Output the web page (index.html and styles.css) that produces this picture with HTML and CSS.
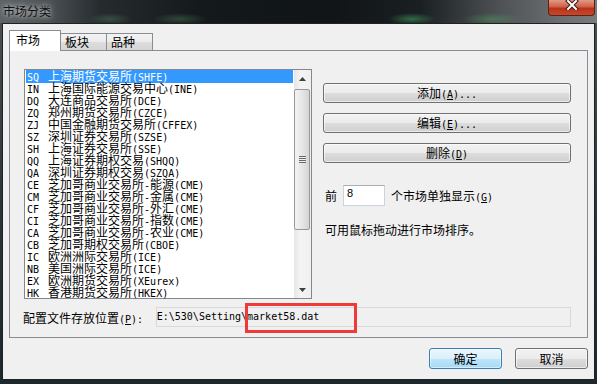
FILE: index.html
```html
<!DOCTYPE html>
<html lang="zh-CN">
  <head>
    <meta charset="UTF-8" />
    <meta name="viewport" content="width=device-width, initial-scale=1.0" />
    <title>市场分类</title>
    <link rel="stylesheet" href="styles.css">
  </head>
  <body>
    <div class="window">
      <div class="titlebar">
        <span class="title">市场分类</span>
        <button class="close">
          <svg width="14" height="10" viewBox="0 0 14 10">
            <path d="M3 1L11 9M11 1L3 9" stroke="#3a1a14" stroke-width="4" stroke-linecap="square" />
            <path d="M3 1L11 9M11 1L3 9" stroke="#fff" stroke-width="2" stroke-linecap="square" />
          </svg>
        </button>
      </div>

      <div class="client">
        <div class="tabs">
          <div class="tab active">市场</div>
          <div class="tab">板块</div>
          <div class="tab">品种</div>
          <div class="tab-fill"></div>
        </div>

        <div class="panel">
          <div class="panel-top">
            <div class="listbox">
              <ul class="list">
                <li class="selected"><span class="code">SQ</span>上海期货交易所<span class="m">(SHFE)</span></li>
                <li><span class="code">IN</span>上海国际能源交易中心<span class="m">(INE)</span></li>
                <li><span class="code">DQ</span>大连商品交易所<span class="m">(DCE)</span></li>
                <li><span class="code">ZQ</span>郑州期货交易所<span class="m">(CZCE)</span></li>
                <li><span class="code">ZJ</span>中国金融期货交易所<span class="m">(CFFEX)</span></li>
                <li><span class="code">SZ</span>深圳证券交易所<span class="m">(SZSE)</span></li>
                <li><span class="code">SH</span>上海证券交易所<span class="m">(SSE)</span></li>
                <li><span class="code">QQ</span>上海证券期权交易<span class="m">(SHQQ)</span></li>
                <li><span class="code">QA</span>深圳证券期权交易<span class="m">(SZQA)</span></li>
                <li><span class="code">CE</span>芝加哥商业交易所<span class="m">-</span>能源<span class="m">(CME)</span></li>
                <li><span class="code">CM</span>芝加哥商业交易所<span class="m">-</span>金属<span class="m">(CME)</span></li>
                <li><span class="code">CF</span>芝加哥商业交易所<span class="m">-</span>外汇<span class="m">(CME)</span></li>
                <li><span class="code">CI</span>芝加哥商业交易所<span class="m">-</span>指数<span class="m">(CME)</span></li>
                <li><span class="code">CA</span>芝加哥商业交易所<span class="m">-</span>农业<span class="m">(CME)</span></li>
                <li><span class="code">CB</span>芝加哥期权交易所<span class="m">(CBOE)</span></li>
                <li><span class="code">IC</span>欧洲洲际交易所<span class="m">(ICE)</span></li>
                <li><span class="code">NB</span>美国洲际交易所<span class="m">(ICE)</span></li>
                <li><span class="code">EX</span>欧洲期货交易所<span class="m">(XEurex)</span></li>
                <li><span class="code">HK</span>香港期货交易所<span class="m">(HKEX)</span></li>
              </ul>
              <div class="scrollbar">
                <div class="sb-arrow">
                  <svg width="7" height="4" viewBox="0 0 7 4"><path d="M0 4H7L3.5 0Z" fill="#404040" /></svg>
                </div>
                <div class="sb-track">
                  <div class="sb-thumb"><span class="grip"></span></div>
                </div>
                <div class="sb-arrow">
                  <svg width="7" height="4" viewBox="0 0 7 4"><path d="M0 0H7L3.5 4Z" fill="#404040" /></svg>
                </div>
              </div>
            </div>

            <div class="side">
              <button class="btn wide">添加<span class="m">(<u>A</u>)...</span></button>
              <button class="btn wide">编辑<span class="m">(<u>E</u>)...</span></button>
              <button class="btn wide">删除<span class="m">(<u>D</u>)</span></button>

              <div class="count-row">
                <span>前</span>
                <input class="count" type="text" value="8" />
                <span>个市场单独显示<span class="m">(<u>G</u>)</span></span>
              </div>
              <p class="hint">可用鼠标拖动进行市场排序。</p>
            </div>
          </div>

          <div class="path-row">
            <label class="path-label">配置文件存放位置<span class="m">(<u>P</u>):</span></label>
            <div class="path-field">
              E:\530\Setting\market58.dat
              <span class="mark"></span>
            </div>
          </div>
        </div>

        <div class="actions">
          <button class="btn action default">确定</button>
          <button class="btn action">取消</button>
        </div>
      </div>
    </div>
  </body>
</html>
```

FILE: styles.css
```css
* {
  box-sizing: border-box;
}

html,
body {
  margin: 0;
}

body {
  width: 597px;
  height: 384px;
  overflow: hidden;
  font-family: "Noto Sans CJK SC", sans-serif;
  font-size: 12px;
  color: #000;
}

.m,
.code {
  font-family: "DejaVu Sans Mono", monospace;
  font-size: 10px;
}

.code {
  margin-right: 9px;
}

.window {
  width: 597px;
  height: 384px;
  display: flex;
  flex-direction: column;
  padding-bottom: 4px;
  background: linear-gradient(to bottom, #4c5254 0, #2c3538 200px, #1d282c 384px);
}

/* title bar */
.titlebar {
  height: 23px;
  flex: none;
  display: flex;
  justify-content: space-between;
  align-items: flex-start;
  padding: 0 2px 0 3px;
  background:
    radial-gradient(ellipse 22px 6px at 110px 19px, rgba(90, 150, 100, 0.35), transparent),
    radial-gradient(ellipse 28px 6px at 180px 19px, rgba(90, 150, 100, 0.35), transparent),
    radial-gradient(ellipse 24px 6px at 412px 19px, rgba(70, 170, 100, 0.55), transparent),
    radial-gradient(ellipse 30px 6px at 492px 19px, rgba(80, 160, 100, 0.45), transparent),
    linear-gradient(to right, #5e6466 0, #4a5053 50px, #262b2e 100px, #14191c 200px, #101417 330px, #1a1f22 420px, #4e5254 500px, #6c6e70 560px, #7a7b7c 597px);
}

.title {
  line-height: 21px;
  color: #111;
  text-shadow: 0 0 4px rgba(255, 255, 255, 0.7), 0 0 8px rgba(255, 255, 255, 0.5);
}

.close {
  width: 47px;
  height: 16px;
  padding: 0;
  border: 1px solid #5a2216;
  border-top: none;
  border-radius: 0 0 4px 4px;
  background: linear-gradient(to bottom, #e29a86 0, #d0604a 45%, #b8321a 55%, #c8482c 100%);
  display: flex;
  justify-content: center;
  align-items: flex-start;
}

/* client area */
.client {
  flex: 1;
  margin: 0 2px;
  border: 1px solid #1e2224;
  background: #f0f0f0;
  padding: 6px 6px 10px;
  display: flex;
  flex-direction: column;
}

.tabs {
  display: flex;
  align-items: flex-end;
  height: 21px;
}

.tab {
  width: 46px;
  height: 18px;
  padding-left: 4px;
  line-height: 16px;
  border: 1px solid #898c95;
  border-left: none;
  background: linear-gradient(to bottom, #f3f3f3 0, #ebebeb 50%, #dddddd 51%, #d5d5d5 100%);
}

.tab.active {
  width: 52px;
  height: 21px;
  padding-left: 6px;
  line-height: 18px;
  border-left: 1px solid #898c95;
  border-bottom: none;
  background: #fff;
}

.tab-fill {
  flex: 1;
  border-bottom: 1px solid #898c95;
}

.panel {
  border: 1px solid #898c95;
  border-top: none;
  padding: 18px 16px 10px 14px;
}

.panel-top {
  display: flex;
  gap: 11px;
}

/* list box */
.listbox {
  width: 288px;
  height: 230px;
  border: 1px solid #828790;
  background: #fff;
  display: flex;
}

.list {
  flex: 1;
  margin: 0;
  padding: 0 1px;
  list-style: none;
}

.list li {
  height: 12px;
  line-height: 12px;
  padding-left: 1px;
  white-space: nowrap;
}

.list li.selected {
  height: 13px;
  margin-bottom: -1px;
  background: #3399ff;
  color: #fff;
}

.scrollbar {
  width: 17px;
  display: flex;
  flex-direction: column;
  background: linear-gradient(to right, #e6e6e6, #f4f4f4 40%, #efefef);
}

.sb-arrow {
  height: 17px;
  display: flex;
  justify-content: center;
  align-items: center;
}

.sb-track {
  flex: 1;
  padding: 2px 1px 0 0;
}

.sb-thumb {
  height: 141px;
  border: 1px solid #979797;
  border-radius: 2px;
  background: linear-gradient(to right, #f3f3f3, #e6e6e6 50%, #d4d4d4);
  display: flex;
  justify-content: center;
  align-items: center;
}

.grip {
  width: 7px;
  height: 7px;
  background: repeating-linear-gradient(to bottom, #6a6a6a 0, #6a6a6a 1px, #eeeeee 1px, #eeeeee 2px);
}

/* right column */
.side {
  width: 248px;
  padding-top: 14px;
  display: flex;
  flex-direction: column;
}

.btn {
  font-family: "Noto Sans CJK SC", sans-serif;
  font-size: 12px;
  color: #000;
  padding: 0;
  border: 1px solid #707070;
  border-radius: 3px;
  background: linear-gradient(to bottom, #f2f2f2 0, #ebebeb 50%, #dddddd 51%, #cfcfcf 100%);
  box-shadow: inset 0 0 0 1px rgba(255, 255, 255, 0.6);
}

.btn.wide {
  height: 20px;
  line-height: 18px;
  margin-bottom: 10px;
}

.count-row {
  margin-top: 12px;
  padding-left: 2px;
  display: flex;
  align-items: center;
  gap: 6px;
}

.count {
  width: 42px;
  height: 21px;
  padding: 0 3px 6px;
  border: 1px solid #c9d4de;
  border-top-color: #abadb3;
  font-family: "Liberation Sans", sans-serif;
  font-size: 11px;
  background: #fff;
}

.hint {
  margin: 18px 0 0;
  padding-left: 2px;
  line-height: 12px;
}

/* config path */
.path-row {
  margin-top: 8px;
  display: flex;
  align-items: center;
}

.path-label {
  width: 133px;
  margin-left: -1px;
}

.path-field {
  position: relative;
  width: 416px;
  height: 20px;
  padding-left: 0;
  line-height: 18px;
  border: 1px solid #d9d9d9;
  background: #f0f0f0;
  font-family: "DejaVu Sans Mono", monospace;
  font-size: 10px;
}

.mark {
  position: absolute;
  left: 88px;
  top: -5px;
  width: 112px;
  height: 30px;
  border: 3px solid #ef3a3a;
}

/* dialog buttons */
.actions {
  margin-top: 10px;
  display: flex;
  justify-content: flex-end;
  gap: 13px;
}

.btn.action {
  width: 73px;
  height: 21px;
}

.btn.default {
  border-color: #3c7fb1;
  background: linear-gradient(to bottom, #eaf6fd 0, #d9f0fc 50%, #bee6fd 51%, #a7d9f5 100%);
  box-shadow: inset 0 0 0 1px rgba(255, 255, 255, 0.5);
}
```
